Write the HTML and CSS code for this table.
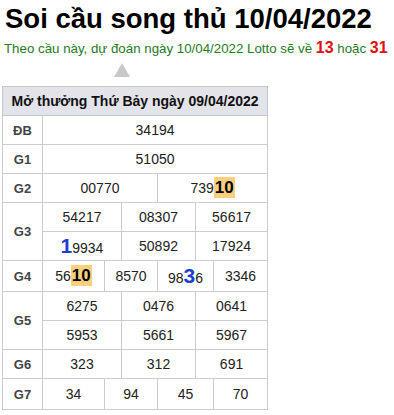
FILE: index.html
```html
<!DOCTYPE html>
<html lang="vi">
<head>
<meta charset="utf-8">
<link rel="stylesheet" href="styles.css">
</head>
<body>
<div class="page">
  <h1 class="title">Soi cầu song thủ 10/04/2022</h1>
  <p class="predict">Theo cầu này, dự đoán ngày 10/04/2022 Lotto sẽ về <b class="num">13</b> hoặc <b class="num">31</b></p>
  <div class="arrow-row"><span class="arrow"></span></div>
  <table class="kq">
    <colgroup>
      <col class="c-label">
      <col class="c1">
      <col class="c2">
      <col class="c3">
      <col class="c4">
      <col class="c5">
      <col class="c6">
    </colgroup>
    <thead>
      <tr><th colspan="7" class="head">Mở thưởng Thứ Bảy ngày 09/04/2022</th></tr>
    </thead>
    <tbody>
      <tr><td class="lbl">ĐB</td><td colspan="6">34194</td></tr>
      <tr><td class="lbl">G1</td><td colspan="6">51050</td></tr>
      <tr><td class="lbl">G2</td><td colspan="3">00770</td><td colspan="3">739<b class="hl">10</b></td></tr>
      <tr><td class="lbl" rowspan="2">G3</td><td colspan="2">54217</td><td colspan="2">08307</td><td colspan="2">56617</td></tr>
      <tr><td colspan="2"><b class="blue">1</b>9934</td><td colspan="2">50892</td><td colspan="2">17924</td></tr>
      <tr class="tall"><td class="lbl">G4</td><td>56<b class="hl">10</b></td><td colspan="2">8570</td><td colspan="2">98<b class="blue">3</b>6</td><td>3346</td></tr>
      <tr><td class="lbl" rowspan="2">G5</td><td colspan="2">6275</td><td colspan="2">0476</td><td colspan="2">0641</td></tr>
      <tr><td colspan="2">5953</td><td colspan="2">5661</td><td colspan="2">5967</td></tr>
      <tr><td class="lbl">G6</td><td colspan="2">323</td><td colspan="2">312</td><td colspan="2">691</td></tr>
      <tr class="tall"><td class="lbl">G7</td><td>34</td><td colspan="2">94</td><td colspan="2">45</td><td>70</td></tr>
    </tbody>
  </table>
</div>
</body>
</html>
```
FILE: styles.css
```css
html, body {
  margin: 0;
  padding: 0;
  background: #fff;
}
body {
  font-family: "Liberation Sans", Arial, sans-serif;
  color: #000;
}
.page {
  padding: 0 2px;
}
.title {
  margin: 0;
  padding: 2px 0 0 3px;
  font-size: 27.5px;
  line-height: 34px;
  font-weight: bold;
}
.predict {
  margin: 3px 0 0 2px;
  font-size: 13.3px;
  line-height: 18px;
  color: #267a26;
}
.predict .num {
  color: #e01010;
  font-size: 16px;
}
.arrow-row {
  height: 20px;
  padding-left: 112px;
  display: flex;
  align-items: flex-end;
}
.arrow {
  width: 0;
  height: 0;
  border-left: 8px solid transparent;
  border-right: 8px solid transparent;
  border-bottom: 14px solid #c8c8c8;
  margin-bottom: 1px;
}
.kq {
  border-collapse: collapse;
  width: 266px;
  table-layout: fixed;
  font-size: 14px;
  margin-top: 8px;
}
.kq col.c-label { width: 40px; }
.kq col.c1 { width: 62px; }
.kq col.c2 { width: 17px; }
.kq col.c3 { width: 36px; }
.kq col.c4 { width: 38px; }
.kq col.c5 { width: 18px; }
.kq col.c6 { width: 54px; }
.kq th, .kq td {
  border: 1px solid #cccccc;
  text-align: center;
  height: 28px;
  padding: 0;
  color: #222;
  white-space: nowrap;
}
.kq tr.tall td {
  height: 30px;
}
.kq .head {
  background: #e3e3ea;
  font-weight: bold;
  font-size: 14px;
  color: #111;
  border-color: #c4c4cc;
}
.kq .lbl {
  font-weight: bold;
  font-size: 13px;
  color: #444;
}
.hl {
  background: #fccf7e;
  font-size: 17px;
  color: #000;
  padding: 1px 1px;
}
.blue {
  color: #1a3fd6;
  font-size: 21px;
}
```
